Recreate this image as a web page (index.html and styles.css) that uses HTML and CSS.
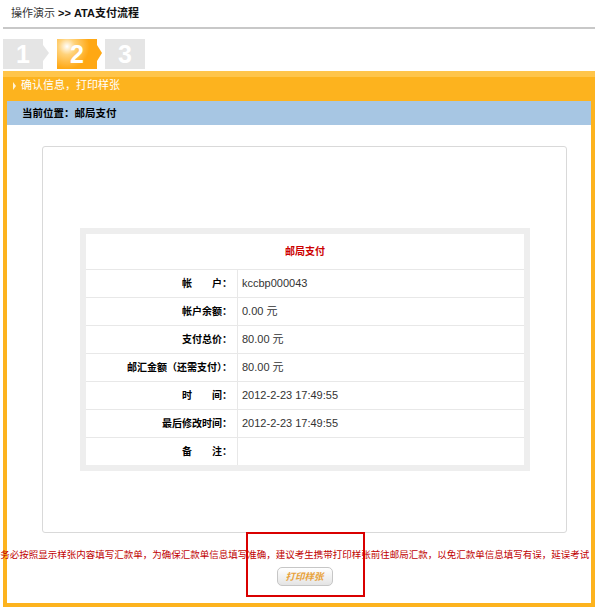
FILE: index.html
```html
<!DOCTYPE html>
<html lang="zh-CN">
<head>
    <meta charset="UTF-8">
    <title>ATA支付流程</title>
    <link rel="stylesheet" href="styles.css">
</head>
<body>
    <!-- 导航 -->
    <div class="crumb">操作演示 <b>&gt;&gt; ATA支付流程</b></div>

    <!-- 步骤 -->
    <div class="steps">
        <div class="step done">1</div>
        <div class="step current">2</div>
        <div class="step">3</div>
    </div>

    <div class="panel">
        <div class="panel-head">确认信息，打印样张</div>
        <div class="location">当前位置：邮局支付</div>

        <div class="panel-body">
            <div class="box">
                <table class="info">
                    <tr>
                        <td class="caption" colspan="2">邮局支付</td>
                    </tr>
                    <tr>
                        <td class="label">帐　　户：</td>
                        <td class="value">kccbp000043</td>
                    </tr>
                    <tr>
                        <td class="label">帐户余额：</td>
                        <td class="value">0.00 元</td>
                    </tr>
                    <tr>
                        <td class="label">支付总价：</td>
                        <td class="value">80.00 元</td>
                    </tr>
                    <tr>
                        <td class="label">邮汇金额（还需支付）：</td>
                        <td class="value">80.00 元</td>
                    </tr>
                    <tr>
                        <td class="label">时　　间：</td>
                        <td class="value">2012-2-23 17:49:55</td>
                    </tr>
                    <tr>
                        <td class="label">最后修改时间：</td>
                        <td class="value">2012-2-23 17:49:55</td>
                    </tr>
                    <tr>
                        <td class="label">备　　注：</td>
                        <td class="value"></td>
                    </tr>
                </table>
            </div>

            <p class="notice">请务必按照显示样张内容填写汇款单，为确保汇款单信息填写准确，建议考生携带打印样张前往邮局汇款，以免汇款单信息填写有误，延误考试</p>

            <div class="actions">
                <button class="print-button">打印样张</button>
            </div>

            <!-- 标注框 -->
            <div class="mark"></div>
        </div>
    </div>
</body>
</html>
```

FILE: styles.css
```css
/* общие */
body {
    margin: 0;
    font-family: "Liberation Sans", "Noto Sans CJK SC", sans-serif;
    color: #333;
    background: #fff;
}

/* 导航 */
.crumb {
    margin: 0 3px;
    height: 27px;
    line-height: 27px;
    padding-left: 8px;
    border-bottom: 2px solid #c8c8c8;
    font-size: 11px;
}

    .crumb b {
        color: #111;
    }

/* 步骤 */
.steps {
    display: flex;
    height: 30px;
    margin: 10px 3px 2px;
}

.step {
    position: relative;
    width: 40px;
    height: 30px;
    background: #e5e5e5;
    color: #fff;
    font: bold 25px/30px "Liberation Sans", sans-serif;
    text-align: center;
}

    .step + .step {
        margin-left: 8px;
    }

    .step.done + .step {
        margin-left: 14px;
    }

    .step.done::after,
    .step.current::after {
        content: "";
        position: absolute;
        left: 100%;
        top: 6px;
        border-left: 6px solid #e5e5e5;
        border-top: 8px solid transparent;
        border-bottom: 8px solid transparent;
    }

    .step.current {
        background: radial-gradient(circle at 25% 25%, #fff 0, #ffd27a 22%, #ffa814 60%);
    }

        .step.current::after {
            border-left: 5px solid #ffa814;
        }

/* 面板 */
.panel {
    margin: 0 3px;
    padding: 0 4px 4px;
    background: #fdb31e;
    border-top: 6px solid #ffc54a;
}

.panel-head {
    height: 24px;
    line-height: 16px;
    padding-left: 6px;
    color: #fff;
    font-size: 11px;
}

    .panel-head::before {
        content: "";
        display: inline-block;
        margin-right: 5px;
        border-left: 3px solid #fff3d6;
        border-top: 4px solid transparent;
        border-bottom: 4px solid transparent;
        vertical-align: -1px;
    }

.location {
    height: 24px;
    line-height: 24px;
    padding-left: 15px;
    background: #a7c6e3;
    color: #000;
    font-size: 10.5px;
    font-weight: bold;
}

.panel-body {
    position: relative;
    padding: 21px 24px 17px 35px;
    background: #fff;
}

.box {
    padding: 81px 0 61px 37px;
    border: 1px solid #d9d9d9;
    border-radius: 3px;
}

/* 信息表 */
.info {
    box-sizing: border-box;
    width: 450px;
    border: 6px solid #eee;
    border-spacing: 0;
}

    .info td {
        padding: 0;
        line-height: 27px;
        border-top: 1px solid #e8e8e8;
    }

    .info .caption {
        line-height: 35px;
        border-top: 0;
        text-align: center;
        color: #c00;
        font-size: 10px;
        font-weight: bold;
    }

    .info .label {
        width: 146px;
        padding-right: 5px;
        text-align: right;
        color: #000;
        font-size: 10px;
        font-weight: bold;
    }

    .info .value {
        padding-left: 4px;
        border-left: 1px solid #e8e8e8;
        font-size: 11px;
    }

/* 提示 */
.notice {
    display: flex;
    justify-content: center;
    margin: 15px 29px 0 0;
    white-space: nowrap;
    line-height: 14px;
    font-size: 9.5px;
    color: #c00000;
}

.actions {
    display: flex;
    justify-content: center;
    margin-top: 5px;
}

.print-button {
    width: 56px;
    height: 19px;
    padding: 0;
    border: 1px solid #c6c6c6;
    border-radius: 5px;
    background: linear-gradient(#fff, #e4e4e4);
    color: #e8a23a;
    font: italic bold 9.5px/17px "Noto Sans CJK SC", sans-serif;
    cursor: pointer;
}

.mark {
    position: absolute;
    left: 239px;
    top: 407px;
    box-sizing: border-box;
    width: 119px;
    height: 65px;
    border: 2px solid #d90000;
}
```
